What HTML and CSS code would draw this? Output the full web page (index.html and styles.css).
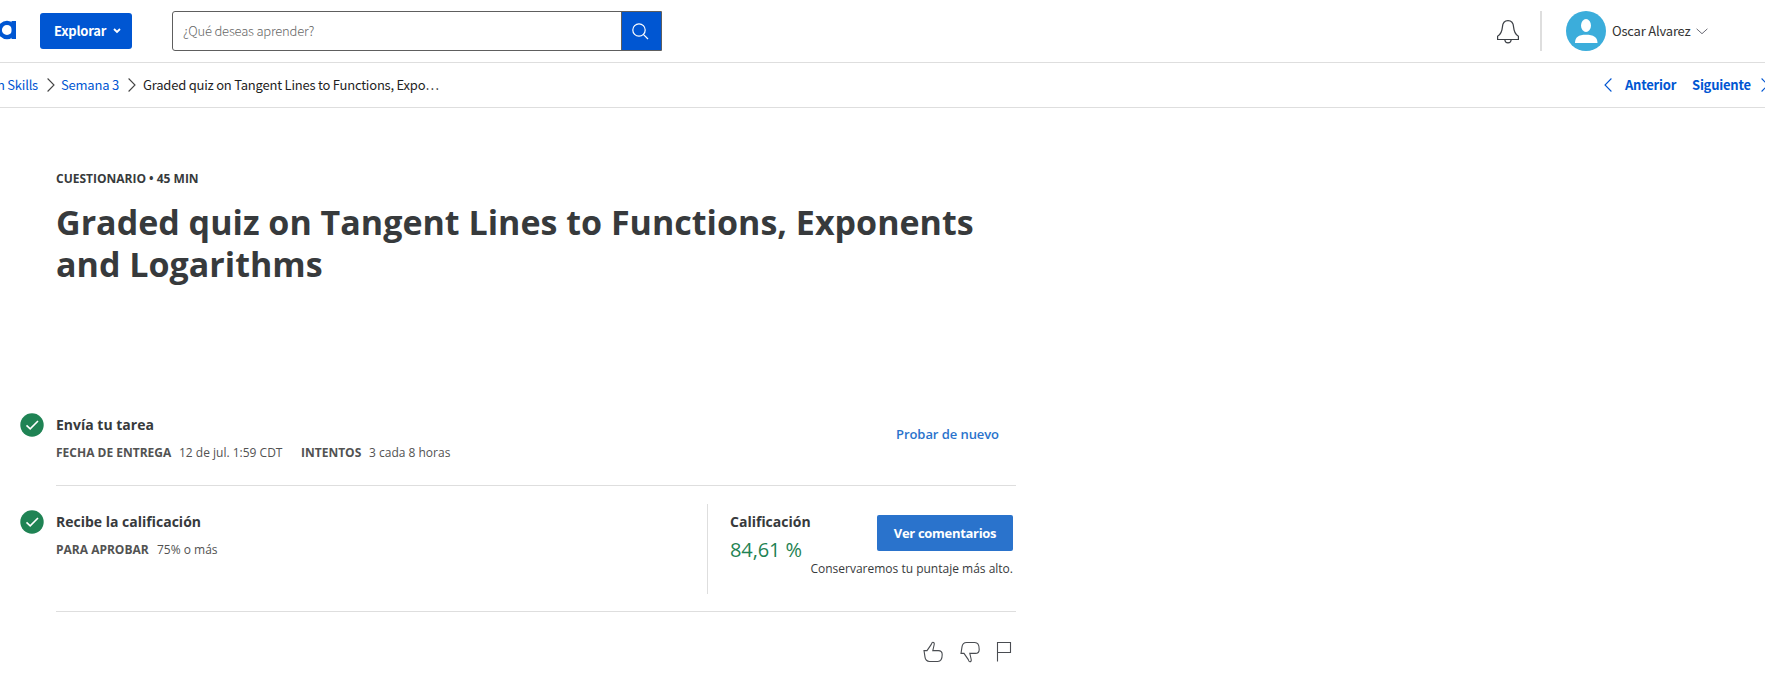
FILE: index.html
```html
<!DOCTYPE html>
<html lang="es">
<head>
<meta charset="utf-8">
<title>Graded quiz</title>
<link rel="stylesheet" href="styles.css">
</head>
<body>
<header class="topbar">
  <svg class="logo" width="16" height="24" viewBox="0 0 16 24"><circle cx="7" cy="12" r="7.200" fill="none" stroke="#0056d2" stroke-width="4.200"/><path d="M11.500 3H16v18h-4.500z" fill="#0056d2"/></svg>
  <button class="explore"><span class="explore-label">Explorar</span><svg width="8" height="6" viewBox="0 0 8 6"><path d="M1 1l3 3 3-3" fill="none" stroke="#fff" stroke-width="1.8"/></svg></button>
  <div class="search">
    <div class="search-field"><span class="placeholder">¿Qué deseas aprender?</span></div>
    <div class="search-button"><svg width="17" height="17" viewBox="0 0 17 17" fill="none" stroke="#fff" stroke-width="1.2"><circle cx="7" cy="7" r="6.2"/><path d="M11.3 11.3l4.7 4.7"/></svg></div>
  </div>
  <div class="account">
    <svg class="bell" width="24" height="26" viewBox="0 0 24 26" fill="none" stroke="#3b3f45" stroke-width="1.2"><path d="M1.600 21.500v-3.200c3.500-2.100 4.400-4.500 4.800-9.200.3-4.400 2.300-6.500 5.600-6.500s5.300 2.100 5.600 6.500c.4 4.700 1.300 7.100 4.800 9.200v3.200z"/><path d="M8.800 21.700c.2 2.100 1.400 3.100 3.200 3.100s3-1 3.200-3.100"/></svg>
    <span class="divider"></span>
    <svg class="avatar" width="40" height="40" viewBox="0 0 40 40"><circle cx="20" cy="20" r="20" fill="#3baddb"/><ellipse cx="20" cy="14.500" rx="5" ry="6.500" fill="#fff"/><path d="M9 32c0-6 3.500-8.300 11-8.300S31.500 26 31.500 32z" fill="#fff"/></svg>
    <span class="username">Oscar Alvarez</span>
    <svg width="12" height="7" viewBox="0 0 12 7"><path d="M.6.8L6 5.700 11.400.8" fill="none" stroke="#6b6b75" stroke-width="1"/></svg>
  </div>
</header>
<nav class="crumbs">
  <a class="crumb first">n Skills</a>
  <svg class="sep" width="8" height="14" viewBox="0 0 8 14"><path d="M.6.500L7 7 .6 13.500" fill="none" stroke="#444" stroke-width="1.100"/></svg>
  <a class="crumb week">Semana 3</a>
  <svg class="sep" width="8" height="14" viewBox="0 0 8 14"><path d="M.6.500L7 7 .6 13.500" fill="none" stroke="#444" stroke-width="1.100"/></svg>
  <span class="crumb current">Graded quiz on Tangent Lines to Functions, Expo…</span>
  <div class="pager">
    <svg width="8" height="14" viewBox="0 0 8 14"><path d="M7.400.500L1 7l6.400 6.500" fill="none" stroke="#0056d2" stroke-width="1.100"/></svg>
    <a class="prev">Anterior</a>
    <a class="next">Siguiente</a>
    <svg width="8" height="14" viewBox="0 0 8 14"><path d="M.6.500L7 7 .6 13.500" fill="none" stroke="#0056d2" stroke-width="1.100"/></svg>
  </div>
</nav>
<main class="content">
  <p class="kind"><span>CUESTIONARIO • 45 MIN</span></p>
  <h1 class="title"><span>Graded quiz on Tangent Lines to Functions, Exponents</span><br><span>and Logarithms</span></h1>
  <section class="step submit">
    <svg class="check" width="24" height="24" viewBox="0 0 24 24"><circle cx="12" cy="12" r="11.700" fill="#1f8354"/><path d="M6.500 12.300l3.700 3.500L18 8" fill="none" stroke="#fff" stroke-width="1.600"/></svg>
    <div class="step-body">
      <div class="step-info">
        <h2>Envía tu tarea</h2>
        <p class="meta"><b class="due">FECHA DE ENTREGA</b><span class="date">12 de jul. 1:59 CDT</span><b class="tries">INTENTOS</b><span>3 cada 8 horas</span></p>
      </div>
      <a class="retry">Probar de nuevo</a>
    </div>
  </section>
  <section class="step grade">
    <svg class="check" width="24" height="24" viewBox="0 0 24 24"><circle cx="12" cy="12" r="11.700" fill="#1f8354"/><path d="M6.500 12.300l3.700 3.500L18 8" fill="none" stroke="#fff" stroke-width="1.600"/></svg>
    <div class="step-body">
      <div class="step-info">
        <h2>Recibe la calificación</h2>
        <p class="meta"><b class="pass">PARA APROBAR</b><span>75% o más</span></p>
      </div>
      <div class="result">
        <div class="score"><h2>Calificación</h2><p>84,61 %</p></div>
        <div class="feedback"><button class="comments">Ver comentarios</button><p>Conservaremos tu puntaje más alto.</p></div>
      </div>
    </div>
  </section>
  <div class="reactions">
    <svg width="20" height="22" viewBox="0 0 20 22"><path id="thumb" d="M1 9.600h3l4.300-6.200C8.700 2.300 9 1.300 9.800 1.300c1.100 0 1.700.9 1.400 2.200L9.800 9.600h5.500c2.500 0 3.900 1.500 3.900 4 0 4.200-1.600 6.900-4.400 6.900H6.600c-2.600 0-4.200-1.500-4.600-4.300z" fill="none" stroke="#4a4d52" stroke-width="1.100"/></svg>
    <svg width="20" height="22" viewBox="0 0 20 22"><use href="#thumb" transform="translate(0 22) scale(1 -1)"/></svg>
    <svg class="flag" width="16" height="21" viewBox="0 0 16 21"><path d="M1.500 20.500V1.500h13v10h-13" fill="none" stroke="#4a4d52" stroke-width="1.100"/></svg>
  </div>
</main>
</body>
</html>
```
FILE: styles.css
```css
* { box-sizing: border-box; }
body { margin: 0; width: 1765px; height: 686px; overflow: hidden; background: #fff; color: #373a3c; font-family: "Open Sans", sans-serif; }
h1, h2, p { margin: 0; }
button { border: 0; padding: 0; font: inherit; }
svg { display: block; flex: none; }
span, a, b, h2, p { white-space: nowrap; }
.topbar, .crumbs { font-family: "Noto Sans CJK SC", sans-serif; }
.topbar { height: 63px; border-bottom: 1px solid #dedede; display: flex; align-items: center; }
.logo { margin: 0 24px 2px 0; }
.explore { width: 92px; height: 36px; border-radius: 3px; background: #0056d2; color: #fff; font-size: 13px; letter-spacing: -.2px; font-weight: 700; display: flex; align-items: center; padding-left: 14px; gap: 7px; }
.explore-label { width: 52px; text-align: left; }
.search { margin-left: 40px; width: 490px; height: 40px; display: flex; border: 1px solid #5e5e5e; border-radius: 3px 0 0 3px; }
.search-field { flex: 1; display: flex; align-items: center; padding-left: 10px; }
.placeholder { color: #666; font-size: 13px; letter-spacing: -.2px; font-weight: 300; }
.search-button { width: 40px; background: #0056d2; border-left: 1px solid #5e5e5e; display: flex; align-items: center; padding-left: 10px; }
.explore-label, .placeholder, .username, .crumb, .pager a { padding-bottom: 2px; }
.account { margin-left: auto; padding-right: 57px; display: flex; align-items: center; }
.divider { width: 2px; height: 40px; background: #dedede; margin: 0 24px 0 20px; }
.username { font-size: 13px; letter-spacing: -.2px; width: 79px; margin: 0 5px 0 6px; color: #333; }
.crumbs { height: 45px; border-bottom: 1px solid #dedede; display: flex; align-items: center; font-size: 13px; letter-spacing: -.22px; }
.crumb, .pager a { color: #0056d2; }
.first { width: 47px; padding-right: 9px; display: flex; justify-content: flex-end; }
.week { width: 67px; margin-left: 6px; }
.crumbs .current { color: #1f1f1f; margin-left: 7px; }
.pager { width: 161px; margin-left: auto; display: flex; align-items: center; font-weight: 700; }
.prev { margin-left: 13px; width: 67px; flex: none; }
.next { width: 69px; flex: none; }
.content { width: 1016px; padding: 61px 0 0 20px; }
.kind { margin-left: 36px; font-size: 12px; line-height: 20px; font-weight: 700; }
.title { margin: 12px 0 0 36px; font-size: 34px; line-height: 42px; font-weight: 700; letter-spacing: .01px; }
.step { display: flex; gap: 12px; }
.submit { margin-top: 122px; }
.check { margin-top: 6px; }
.step-body { flex: 1; display: flex; justify-content: space-between; border-bottom: 1px solid #dedede; }
.submit .step-body { height: 79px; }
.step-info h2, .score h2 { font-size: 14px; line-height: 20px; font-weight: 700; }
.step-info { padding-top: 8px; }
.meta { display: flex; margin-top: 8px; font-size: 12px; line-height: 20px; color: #525252; }
.meta b { font-weight: 700; }
.due { width: 123px; }
.date { width: 122px; }
.tries { width: 68px; }
.pass { width: 101px; }
.retry { color: #2a73cc; font-size: 13px; line-height: 20px; font-weight: 600; letter-spacing: -.07px; margin: 17px 17px 0 0; }
.grade { margin-top: 18px; }
.grade .step-body { height: 108px; }
.result { height: 90px; width: 309px; border-left: 1px solid #dedede; padding: 8px 3px 0 22px; display: flex; }
.score { width: 81px; flex: none; }
.score p { color: #1f8354; font-size: 20px; line-height: 28px; margin-top: 4px; letter-spacing: -.1px; }
.feedback { width: 202px; display: flex; flex-direction: column; align-items: flex-end; padding-top: 3px; }
.comments { width: 136px; height: 36px; background: #2a73cc; color: #fff; border-radius: 2px; font-size: 13px; font-weight: 700; letter-spacing: -.3px; }
.feedback p { font-size: 12px; line-height: 20px; margin-top: 8px; }
.reactions { display: flex; justify-content: flex-end; gap: 17px; padding: 29px 4px 0 0; }
.flag { margin-left: -1px; }
```
